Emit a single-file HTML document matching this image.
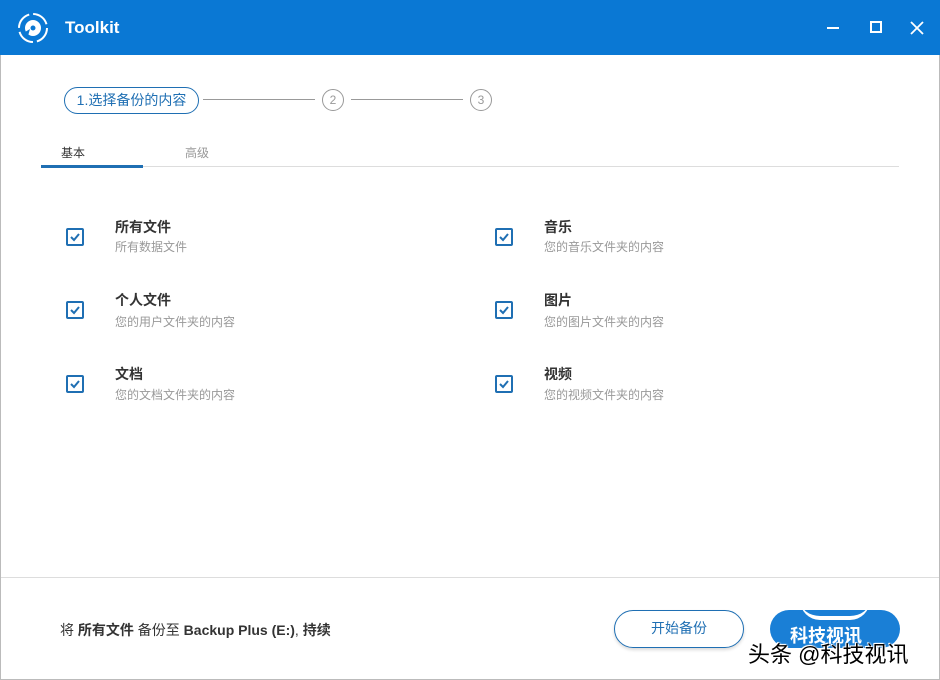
<!DOCTYPE html><html><head><meta charset="utf-8"><style>
*{margin:0;padding:0;box-sizing:border-box}
body{width:940px;height:680px;overflow:hidden;background:#fff;font-family:"Liberation Sans","Noto Sans CJK SC",sans-serif;position:relative}
.win{position:absolute;left:0;top:0;width:940px;height:680px;border:1px solid #bbb}
.tb{position:absolute;left:0;top:0;width:940px;height:55px;background:#0a78d4}
.tb .t{position:absolute;left:65px;top:18px;color:#fff;font-weight:bold;font-size:17px}
.cb{position:absolute;width:18px;height:18px;border:2px solid #1f6fb3;border-radius:2px}
.cb svg{position:absolute;left:1px;top:1px}
.h{position:absolute;font-size:14px;color:#333;font-weight:600}
.s{position:absolute;font-size:12px;color:#999}
</style></head><body>
<div class="win"></div>
<div class="tb">
<svg style="position:absolute;left:16px;top:12px" width="34" height="32" viewBox="0 0 34 32"><circle cx="17" cy="16" r="14" fill="none" stroke="#fff" stroke-width="2" stroke-dasharray="18 4"/><circle cx="17" cy="16" r="8" fill="#fff"/><circle cx="17" cy="16" r="2.5" fill="#0a78d4"/><path d="M9 20 L14 17 L12 24Z" fill="#0a78d4"/></svg>
<div class="t">Toolkit</div>
<div style="position:absolute;left:827px;top:27px;width:12px;height:2px;background:#fff"></div>
<div style="position:absolute;left:870px;top:21px;width:12px;height:12px;border:2px solid #fff"></div>
<svg style="position:absolute;left:910px;top:21px" width="14" height="14"><path d="M1 1L13 13M13 1L1 13" stroke="#fff" stroke-width="1.8"/></svg>
</div>
<div style="position:absolute;left:64px;top:87px;width:135px;height:27px;border:1.5px solid #1f6fb3;border-radius:14px;color:#1f6fb3;font-size:14px;line-height:24px;text-align:center">1.选择备份的内容</div>
<div style="position:absolute;left:203px;top:99px;width:112px;height:1px;background:#999"></div>
<div style="position:absolute;left:322px;top:89px;width:22px;height:22px;border:1px solid #999;border-radius:50%;font-size:12px;color:#999;text-align:center;line-height:20px">2</div>
<div style="position:absolute;left:351px;top:99px;width:112px;height:1px;background:#999"></div>
<div style="position:absolute;left:470px;top:89px;width:22px;height:22px;border:1px solid #999;border-radius:50%;font-size:12px;color:#999;text-align:center;line-height:20px">3</div>
<div style="position:absolute;left:61px;top:144px;font-size:12px;color:#333">基本</div>
<div style="position:absolute;left:185px;top:144px;font-size:12px;color:#999">高级</div>
<div style="position:absolute;left:41px;top:166px;width:858px;height:1px;background:#ddd"></div>
<div style="position:absolute;left:41px;top:165px;width:102px;height:3px;background:#1f6fb3"></div>

<div class="cb" style="left:66px;top:228px"><svg width="12" height="12"><path d="M2 6L5 9L10 3" stroke="#1f6fb3" stroke-width="2" fill="none"/></svg></div>
<div class="h" style="left:115px;top:217px">所有文件</div><div class="s" style="left:115px;top:238px">所有数据文件</div>
<div class="cb" style="left:66px;top:301px"><svg width="12" height="12"><path d="M2 6L5 9L10 3" stroke="#1f6fb3" stroke-width="2" fill="none"/></svg></div>
<div class="h" style="left:115px;top:290px">个人文件</div><div class="s" style="left:115px;top:313px">您的用户文件夹的内容</div>
<div class="cb" style="left:66px;top:375px"><svg width="12" height="12"><path d="M2 6L5 9L10 3" stroke="#1f6fb3" stroke-width="2" fill="none"/></svg></div>
<div class="h" style="left:115px;top:364px">文档</div><div class="s" style="left:115px;top:386px">您的文档文件夹的内容</div>

<div class="cb" style="left:495px;top:228px"><svg width="12" height="12"><path d="M2 6L5 9L10 3" stroke="#1f6fb3" stroke-width="2" fill="none"/></svg></div>
<div class="h" style="left:544px;top:217px">音乐</div><div class="s" style="left:544px;top:238px">您的音乐文件夹的内容</div>
<div class="cb" style="left:495px;top:301px"><svg width="12" height="12"><path d="M2 6L5 9L10 3" stroke="#1f6fb3" stroke-width="2" fill="none"/></svg></div>
<div class="h" style="left:544px;top:290px">图片</div><div class="s" style="left:544px;top:313px">您的图片文件夹的内容</div>
<div class="cb" style="left:495px;top:375px"><svg width="12" height="12"><path d="M2 6L5 9L10 3" stroke="#1f6fb3" stroke-width="2" fill="none"/></svg></div>
<div class="h" style="left:544px;top:364px">视频</div><div class="s" style="left:544px;top:386px">您的视频文件夹的内容</div>

<div style="position:absolute;left:1px;top:577px;width:938px;height:1px;background:#ddd"></div>
<div style="position:absolute;left:60px;top:620px;font-size:14px;color:#333">将 <b>所有文件</b> 备份至 <b>Backup Plus (E:)</b>, <b>持续</b></div>
<div style="position:absolute;left:614px;top:610px;width:130px;height:38px;border:1.5px solid #1f6fb3;border-radius:19px;color:#1f6fb3;font-size:14px;line-height:35px;text-align:center;box-shadow:0 2px 3px rgba(0,0,0,.15)">开始备份</div>
<div style="position:absolute;left:770px;top:610px;width:130px;height:38px;background:#1a7fd6;border-radius:19px"></div>
<div style="position:absolute;left:800px;top:600px;width:70px;height:20px;border-bottom:4px solid #fff;border-radius:0 0 35px 35px"></div>
<div style="position:absolute;left:790px;top:622px;color:#fff;font-size:18px;font-weight:bold">科技视讯</div>
<div style="position:absolute;left:748px;top:637px;font-size:22px;color:#000;text-shadow:0 0 2px #fff,0 0 2px #fff,1px 1px 0 #fff,-1px -1px 0 #fff">头条 @科技视讯</div>
</body></html>
